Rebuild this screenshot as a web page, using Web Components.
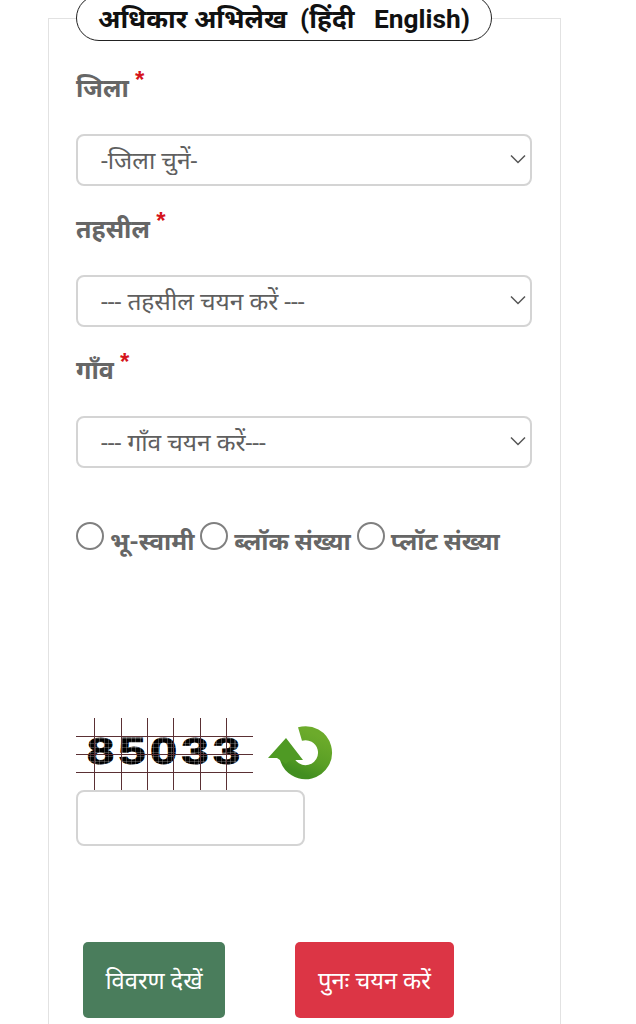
<!DOCTYPE html>
<html lang="hi">
<head>
<meta charset="utf-8">
<title>अधिकार अभिलेख</title>
<style>
  html, body { margin: 0; height: 1024px; overflow: hidden; background: #fff; }
  body { font-family: Roboto, "Noto Sans", "Noto Sans Devanagari", sans-serif; }
</style>
</head>
<body>
<record-form>
  <span slot="title">अधिकार अभिलेख&nbsp; (हिंदी &nbsp; English)</span>
  <field-select label="जिला" placeholder="-जिला चुनें-"></field-select>
  <field-select label="तहसील" placeholder="--- तहसील चयन करें ---" style="margin-top:25px"></field-select>
  <field-select label="गाँव" placeholder="--- गाँव चयन करें---" style="margin-top:25px"></field-select>
  <radio-row></radio-row>
  <captcha-box code="85033"></captcha-box>
  <action-buttons></action-buttons>
</record-form>

<script>
class RecordForm extends HTMLElement {
  constructor() {
    super();
    this.attachShadow({ mode: "open" });
    this.shadowRoot.innerHTML = `
      <style>
        :host {
          display: block;
          box-sizing: border-box;
          width: 513px;
          height: 1006px;
          margin: 18px 0 0 48px;
          padding: 0 28px 0 27px;
          border: 1px solid #e2e2e2;
          border-bottom: 0;
          color: #555;
        }
        .legend {
          display: flex;
          align-items: center;
          justify-content: center;
          box-sizing: border-box;
          width: 416px;
          height: 46px;
          margin: -24px 0 29px;
          background: #fff;
          border: 1.5px solid #222;
          border-radius: 23px;
          color: #111;
          font-size: 26.3px;
          font-weight: 700;
          white-space: pre;
        }
      </style>
      <div class="legend"><slot name="title"></slot></div>
      <slot></slot>
    `;
  }
}

class FieldSelect extends HTMLElement {
  constructor() {
    super();
    this.attachShadow({ mode: "open" });
  }

  connectedCallback() {
    const label = this.getAttribute("label") || "";
    const placeholder = this.getAttribute("placeholder") || "";
    this.shadowRoot.innerHTML = `
      <style>
        :host { display: block; }
        label {
          display: block;
          height: 38px;
          margin-bottom: 26px;
          color: #666;
          font-size: 25px;
          font-weight: 700;
          line-height: 38px;
        }
        .star {
          position: relative;
          top: -9px;
          color: #d5141c;
          font: 700 24px "Liberation Sans", sans-serif;
        }
        .wrap { position: relative; height: 52px; }
        select {
          appearance: none;
          box-sizing: border-box;
          width: 100%;
          height: 52px;
          padding: 0 40px 0 23px;
          background: #fff;
          border: 2px solid #d4d4d4;
          border-radius: 8px;
          color: #5f5f5f;
          font: 400 24.5px Roboto, "Noto Sans", sans-serif;
        }
        svg { position: absolute; right: 6px; top: 20px; pointer-events: none; }
      </style>
      <label>${label} <span class="star">*</span></label>
      <div class="wrap">
        <select><option>${placeholder}</option></select>
        <svg width="16" height="11" viewBox="0 0 16 11" fill="none" stroke="#555" stroke-width="1.5">
          <path d="M1 1.5l7 7 7-7"/>
        </svg>
      </div>
    `;
  }
}

class RadioRow extends HTMLElement {
  constructor() {
    super();
    this.attachShadow({ mode: "open" });
    const items = ["भू-स्वामी", "ब्लॉक संख्या", "प्लॉट संख्या"];
    this.shadowRoot.innerHTML = `
      <style>
        :host {
          display: flex;
          align-items: flex-start;
          height: 60px;
          margin-top: 54px;
          color: #666;
          font-size: 24.5px;
          font-weight: 700;
          line-height: 32px;
        }
        label { display: flex; align-items: flex-start; margin-right: 6px; white-space: nowrap; }
        label:first-child { margin-right: 0; }
        i {
          flex: none;
          box-sizing: border-box;
          width: 28px;
          height: 28px;
          margin-right: 6px;
          border: 2px solid #808080;
          border-radius: 50%;
        }
        span { margin-top: 4px; }
      </style>
      ${items.map((t) => `<label><i></i><span>${t}</span></label>`).join("")}
    `;
  }
}

class CaptchaBox extends HTMLElement {
  constructor() {
    super();
    this.attachShadow({ mode: "open" });
  }

  connectedCallback() {
    const code = this.getAttribute("code") || "";
    this.shadowRoot.innerHTML = `
      <style>
        :host { display: block; margin-top: 136px; }
        .top { display: flex; align-items: flex-start; height: 72px; }
        .code {
          position: relative;
          width: 177px;
          height: 72px;
        }
        .digits {
          position: absolute;
          left: 11px;
          top: 11px;
          color: #000;
          font: 700 37px/46px "Liberation Sans", sans-serif;
          letter-spacing: 3.3px;
          -webkit-text-stroke: 0.9px #000;
          transform: scaleX(1.32);
          transform-origin: left;
          white-space: nowrap;
        }
        .mesh {
          position: absolute;
          left: 10px;
          top: 18px;
          width: 156px;
          height: 30px;
          background:
            repeating-linear-gradient(0deg, rgba(255,255,255,.22) 0 1px, transparent 1px 4.5px),
            repeating-linear-gradient(90deg, rgba(255,255,255,.22) 0 1px, transparent 1px 4.5px);
        }
        .code svg { position: absolute; left: 0; top: 0; }
        .refresh { margin: 8px 0 0 15px; }
        input {
          display: block;
          box-sizing: border-box;
          width: 229px;
          height: 56px;
          background: #fff;
          border: 2px solid #d4d4d4;
          border-radius: 8px;
        }
      </style>
      <div class="top">
        <div class="code">
          <span class="digits">${code}</span>
          <div class="mesh"></div>
          <svg width="177" height="72" viewBox="0 0 177 72" fill="none" stroke="#5a3034" stroke-width="1">
            <path d="M0 18.5h177M0 36.5h177M0 54.5h177M18.5 0v72M45.500 0v72M71.500 0v72M97.500 0v72M124.500 0v72M150.500 0v72"/>
          </svg>
        </div>
        <svg class="refresh" width="65" height="56" viewBox="0 0 65 56">
          <defs>
            <linearGradient id="g" x1="0.7" y1="0" x2="0.3" y2="1">
              <stop offset="0" stop-color="#6cab2b"/>
              <stop offset="0.6" stop-color="#5a9f25"/>
              <stop offset="1" stop-color="#428e20"/>
            </linearGradient>
          </defs>
          <path fill="none" stroke="url(#g)" stroke-width="14" d="M32 8A19.500 19.500 0 1 1 18.500 31"/>
          <path fill="#4f9a24" d="M0 32L18 12l17 22-9 0c-1 0-5 0-8 4L9 32z"/>
        </svg>
      </div>
      <input type="text" aria-label="कैप्चा">
    `;
  }
}

class ActionButtons extends HTMLElement {
  constructor() {
    super();
    this.attachShadow({ mode: "open" });
    this.shadowRoot.innerHTML = `
      <style>
        :host { display: flex; margin: 96px 0 0 7px; gap: 70px; }
        button {
          height: 76px;
          border: 0;
          border-radius: 5px;
          color: #fff;
          font: 400 23.7px Roboto, "Noto Sans", sans-serif;
        }
        .view { width: 142px; background: #4a7d5c; }
        .reset { width: 159px; background: #dc3545; }
      </style>
      <button class="view">विवरण देखें</button>
      <button class="reset">पुनः चयन करें</button>
    `;
  }
}

customElements.define("record-form", RecordForm);
customElements.define("field-select", FieldSelect);
customElements.define("radio-row", RadioRow);
customElements.define("captcha-box", CaptchaBox);
customElements.define("action-buttons", ActionButtons);
</script>
</body>
</html>
